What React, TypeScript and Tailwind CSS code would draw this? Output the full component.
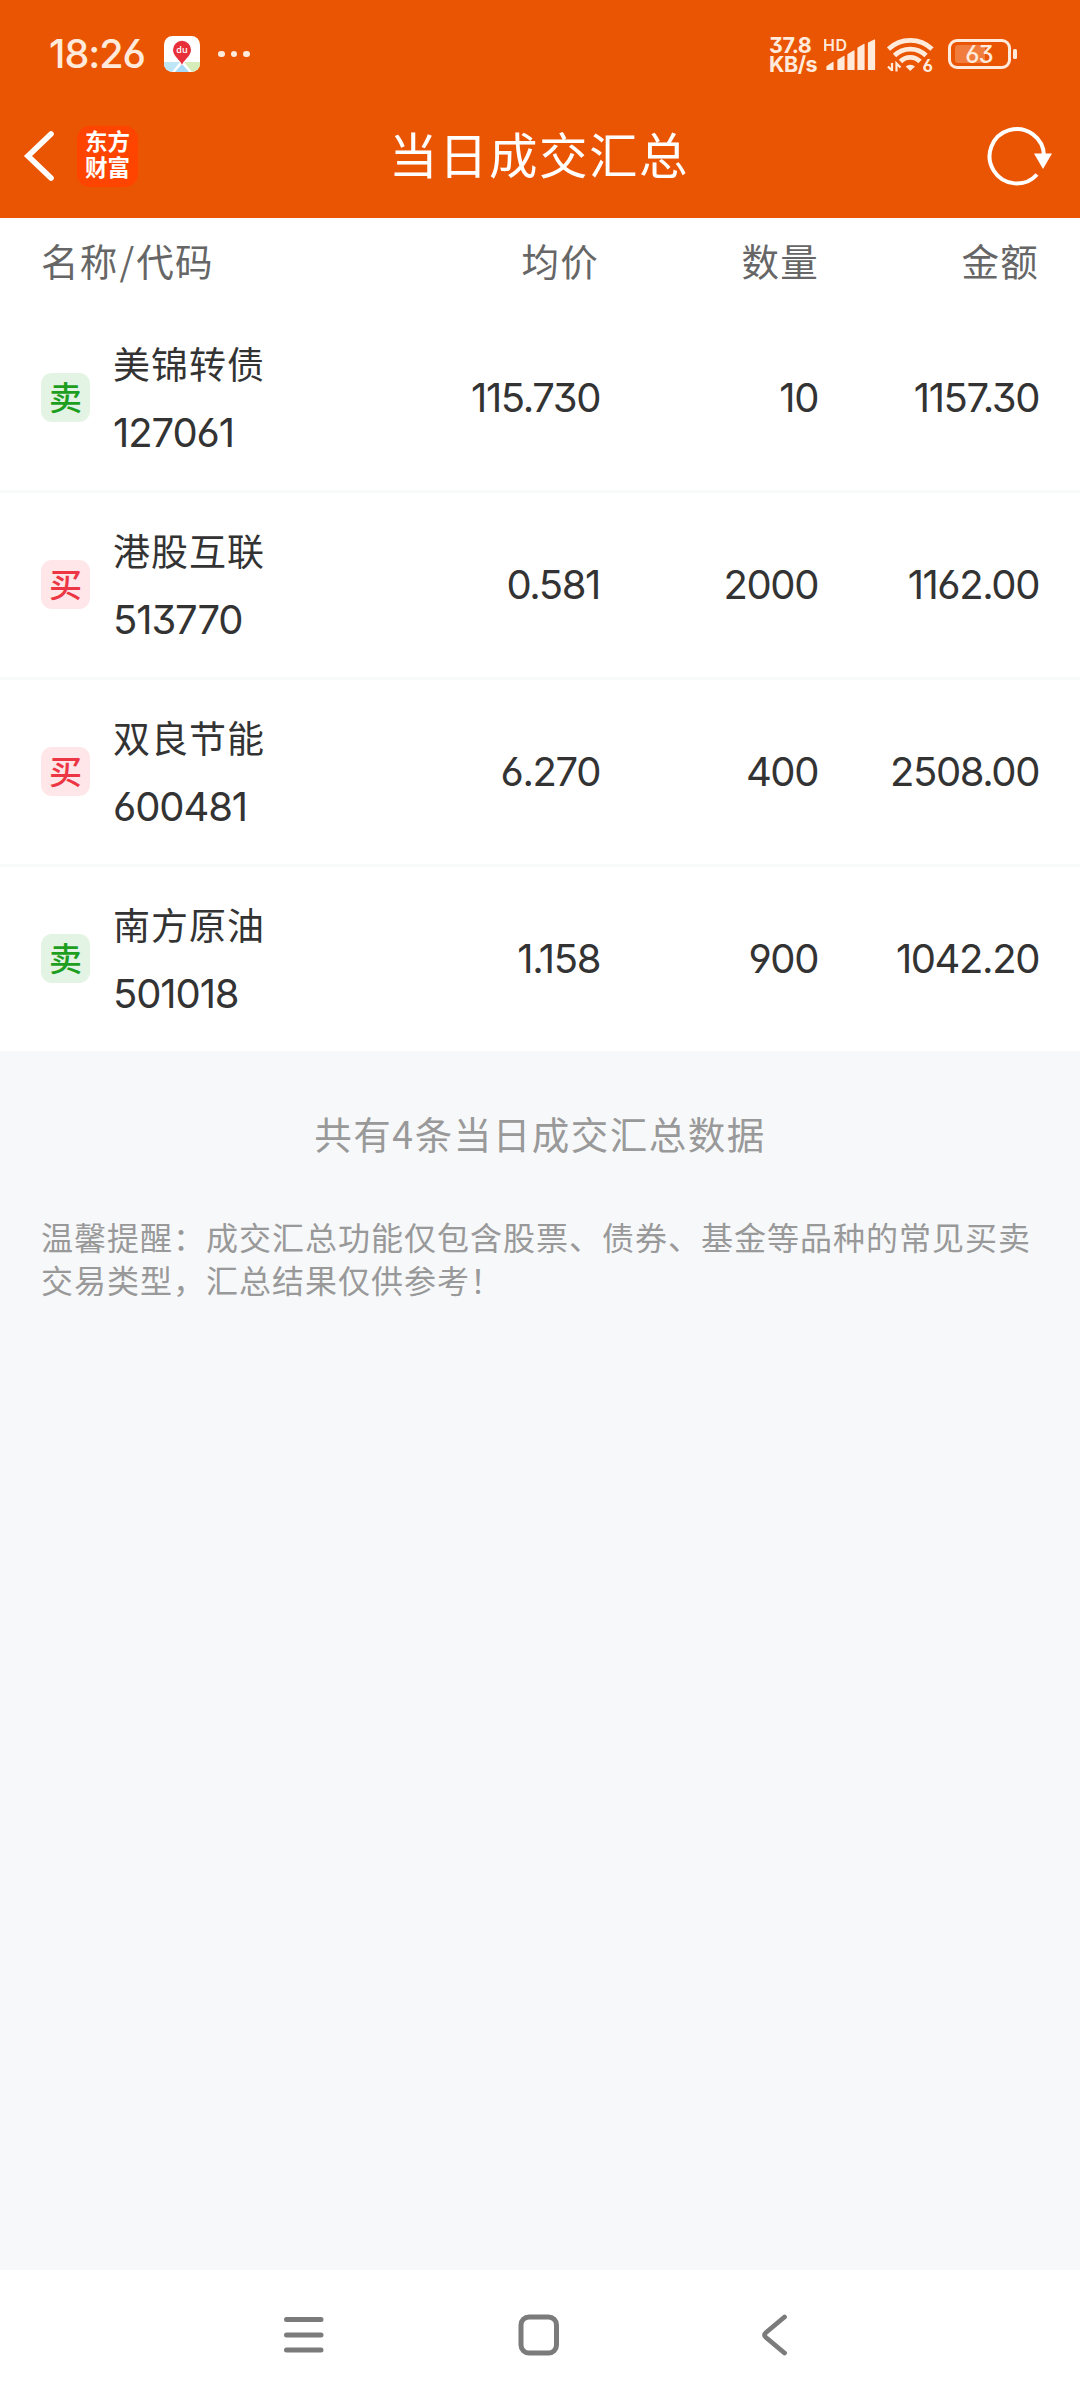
import { clsx } from 'clsx';

type Side = 'buy' | 'sell';

interface Deal {
  side: Side;
  name: string;
  code: string;
  price: string;
  count: string;
  amount: string;
}

const deals: Deal[] = [
  { side: 'sell', name: '美锦转债', code: '127061', price: '115.730', count: '10', amount: '1157.30' },
  { side: 'buy', name: '港股互联', code: '513770', price: '0.581', count: '2000', amount: '1162.00' },
  { side: 'buy', name: '双良节能', code: '600481', price: '6.270', count: '400', amount: '2508.00' },
  { side: 'sell', name: '南方原油', code: '501018', price: '1.158', count: '900', amount: '1042.20' },
];

const numberClass =
  "font-['Inter','Noto_Sans_CJK_SC',sans-serif] text-[40px] font-normal [font-feature-settings:'cv03','cv04','cv09']";

function MapAppIcon() {
  return (
    <svg className="w-9 h-9" viewBox="0 0 36 36">
      <defs>
        <clipPath id="map-app">
          <rect width="36" height="36" rx="8.5" />
        </clipPath>
      </defs>
      <g clipPath="url(#map-app)">
        <rect width="36" height="36" fill="#fff" />
        <path d="M0 26H16L8 36H0Z" fill="#bfe6f7" />
        <path d="M20 26H36V36H28Z" fill="#d5edb9" />
        <path d="M17 29H19L25 36H11Z" fill="#a9daf5" />
        <path d="M18 29C17.3 25 9 20.500 9 13.800A9 9 0 0 1 27 13.800C27 20.500 18.700 25 18 29Z" fill="#e8303a" />
      </g>
      <text
        x="18"
        y="17"
        textAnchor="middle"
        className="font-['Open_Sans',sans-serif] text-[9px] font-semibold"
        fill="#fff"
      >
        du
      </text>
    </svg>
  );
}

function SignalIcon() {
  return (
    <svg className="w-[52px] h-9" viewBox="0 0 52 36" fill="#ffeadb">
      <text x="-1" y="14.500" className="font-['Inter',sans-serif] text-[16px] font-semibold" textLength="24">
        HD
      </text>
      <g stroke="#ffeadb" strokeWidth="1.200" strokeLinejoin="round">
        <path d="M3 33.500V30.500L9 26.500V33.500Z" />
        <path d="M14 33.500V24L20 20.500V33.500Z" />
        <path d="M24 33.500V18.500L30 15V33.500Z" />
        <path d="M34 33.500V12L40 8.500V33.500Z" />
        <path d="M44.500 33.500V7L50.500 4V33.500Z" />
      </g>
    </svg>
  );
}

function WifiIcon() {
  return (
    <svg className="w-[49px] h-[44px]" viewBox="0 -4 49 44">
      <g fill="none" stroke="#ffeadb" strokeWidth="4.700">
        <path d="M1.500 13A31.500 31.500 0 0 1 45 13" />
        <path d="M7.500 19.500A22.500 22.500 0 0 1 39 19.500" />
        <path d="M13.500 25.500A13.500 13.500 0 0 1 33 25.500" />
      </g>
      <path d="M18.700 30.500A7 7 0 0 1 28 30.500L23.300 35Z" fill="#ffeadb" />
      <path d="M5 27V35M1 30.500L5 34.500M9.500 35.500V27.500L13.500 31.500" fill="none" stroke="#ffeadb" strokeWidth="2.200" />
      <text x="35.500" y="35.500" className="font-['Inter',sans-serif] text-[17px] font-bold [font-feature-settings:'cv03']" fill="#ffeadb">
        6
      </text>
    </svg>
  );
}

function BatteryIcon() {
  return (
    <svg className="w-[70px] h-[30px]" viewBox="0 0 70 30">
      <rect x="1.500" y="1.500" width="60" height="27" rx="7.500" fill="none" stroke="#ffeadb" strokeWidth="3" />
      <rect x="7" y="6" width="30" height="18" rx="3" fill="#f07c3e" />
      <rect x="65" y="10" width="4" height="10" rx="1.500" fill="#ffeadb" />
      <text
        x="31"
        y="24"
        textAnchor="middle"
        fill="#ffeadb"
        className="font-['Inter',sans-serif] text-[24px] font-medium tracking-[-1px] [font-feature-settings:'cv03','cv09']"
      >
        63
      </text>
    </svg>
  );
}

function StatusBar() {
  return (
    <div className="flex items-center h-[94px] pt-[14px] pl-[49px] pr-[62px] text-[#ffeadb]">
      <span className="w-[97px] whitespace-nowrap font-['Inter',sans-serif] text-[39.500px] leading-[42px] font-medium tracking-[-1px] [font-feature-settings:'cv03','cv04']">
        18:26
      </span>
      <div className="ml-[18px]">
        <MapAppIcon />
      </div>
      <div className="flex gap-[6px] ml-[18px]">
        <i className="w-[6.500px] h-[6.500px] rounded-full bg-[#ffeadb]" />
        <i className="w-[6.500px] h-[6.500px] rounded-full bg-[#ffeadb]" />
        <i className="w-[6.500px] h-[6.500px] rounded-full bg-[#ffeadb]" />
      </div>
      <div className="flex items-center ml-auto">
        <div className="w-[48px] pt-px whitespace-nowrap font-['Inter',sans-serif] text-[21.500px] leading-[18.500px] font-bold tracking-[-0.500px] [font-feature-settings:'cv09']">
          <div>37.8</div>
          <div>KB/s</div>
        </div>
        <div className="ml-[7px]">
          <SignalIcon />
        </div>
        <div className="ml-[11px]">
          <WifiIcon />
        </div>
        <div className="ml-[12px]">
          <BatteryIcon />
        </div>
      </div>
    </div>
  );
}

function TitleBar() {
  return (
    <div className="flex items-center justify-between h-[124px] pl-[23px] pr-7">
      <div className="flex items-center gap-[23px] w-[115px]">
        <svg className="w-[31px] h-[52px]" viewBox="0 0 31 52" fill="none" stroke="#fff" strokeWidth="5.600">
          <path d="M28 4L5 26L28 48" strokeLinecap="round" />
        </svg>
        <div className="flex flex-col items-center justify-center w-[61px] h-[61px] pb-[6px] rounded-[13px] bg-[#ff4400] text-white font-bold text-[22.500px] leading-[26.500px] whitespace-nowrap">
          <span>东方</span>
          <span>财富</span>
        </div>
      </div>
      <h1 className="pb-[6px] pl-[3px] text-white text-[48.500px] leading-[60px] tracking-[1.500px]">当日成交汇总</h1>
      <div className="flex justify-end w-[115px]">
        <svg className="w-[68px] h-[62px]" viewBox="0 0 68 62">
          <path d="M60 31A27.200 27.200 0 1 0 53 49.500" fill="none" stroke="#fff" strokeWidth="4" />
          <path d="M50 28.500H68L59 44Z" fill="#fff" />
        </svg>
      </div>
    </div>
  );
}

function SideBadge({ side }: { side: Side }) {
  return (
    <div
      className={clsx(
        'flex items-center justify-center w-[49px] h-[49px] mb-[2px] pb-[2px] rounded-[11px] text-[33px] leading-[47px] font-medium',
        side === 'sell' ? 'bg-[#e3f4e4] text-[#1e9e1e]' : 'bg-[#ffe6e8] text-[#ec3644]'
      )}
    >
      {side === 'sell' ? '卖' : '买'}
    </div>
  );
}

function DealRow({ deal, first }: { deal: Deal; first: boolean }) {
  return (
    <div
      className={clsx(
        'flex items-center px-[41px]',
        first ? 'h-[186px] pt-[2px]' : 'h-[187px] border-t-[3px] border-[#f8f9f9]'
      )}
    >
      <SideBadge side={deal.side} />
      <div className="ml-[23px] w-[220px]">
        <div className="text-[37px] leading-[69px] tracking-[1px]">{deal.name}</div>
        <div className={clsx(numberClass, 'leading-[69px] tracking-[-1.100px]')}>{deal.code}</div>
      </div>
      <div className={clsx(numberClass, 'flex-1 text-right tracking-[-1.400px]')}>{deal.price}</div>
      <div className={clsx(numberClass, 'w-[218px] text-right tracking-[-1.400px]')}>{deal.count}</div>
      <div className={clsx(numberClass, 'w-[221px] text-right tracking-[-1.400px]')}>{deal.amount}</div>
    </div>
  );
}

function SystemNav() {
  return (
    <nav className="flex items-center h-[130px] pl-[283px] bg-white">
      <svg className="w-[41px] h-[42px]" viewBox="0 0 41 42" stroke="#7b7b7b" strokeWidth="5" strokeLinecap="round">
        <path d="M3.500 5.500H38M3.500 21H38M3.500 36H38" />
      </svg>
      <svg className="w-[42px] h-[42px] ml-[194px]" viewBox="0 0 42 42" fill="none" stroke="#7b7b7b" strokeWidth="5">
        <rect x="3" y="3" width="35.500" height="36" rx="8" />
      </svg>
      <svg className="w-[28px] h-[42px] ml-[200px]" viewBox="0 0 28 42" fill="none" stroke="#7b7b7b" strokeWidth="4.800">
        <path d="M24.500 3L6 18.500Q3 21 6 23.500L24.500 39" strokeLinecap="round" strokeLinejoin="round" />
      </svg>
    </nav>
  );
}

export default function App() {
  return (
    <div className="flex flex-col w-[1080px] h-[2400px] bg-[#f7f8fa] text-[#333] font-['Noto_Sans_CJK_SC',sans-serif]">
      <header className="bg-[#ea5504]">
        <StatusBar />
        <TitleBar />
      </header>

      <main className="flex-1">
        <div className="bg-white">
          {/* Column titles */}
          <div className="flex items-center h-[86px] pb-[2px] px-[41px] text-[37.500px] tracking-[1.200px] text-[#666]">
            <div className="w-[292px]">
              名称<span className="mx-[1px]">/</span>代码
            </div>
            <div className="flex-1 text-right">均价</div>
            <div className="w-[220px] text-right">数量</div>
            <div className="w-[220px] text-right">金额</div>
          </div>

          {deals.map((deal, i) => (
            <DealRow key={deal.code} deal={deal} first={i === 0} />
          ))}
        </div>

        <p className="mt-[54px] text-center text-[37.500px] leading-[56px] tracking-[1.500px] text-[#999]">
          共有4条当日成交汇总数据
        </p>
        <p className="mt-[54px] pl-[41px] text-[32px] leading-[43px] tracking-[1px] text-[#999]">
          温馨提醒：成交汇总功能仅包含股票、债券、基金等品种的常见买卖
          <br />
          交易类型，汇总结果仅供参考！
        </p>
      </main>

      <SystemNav />
    </div>
  );
}
